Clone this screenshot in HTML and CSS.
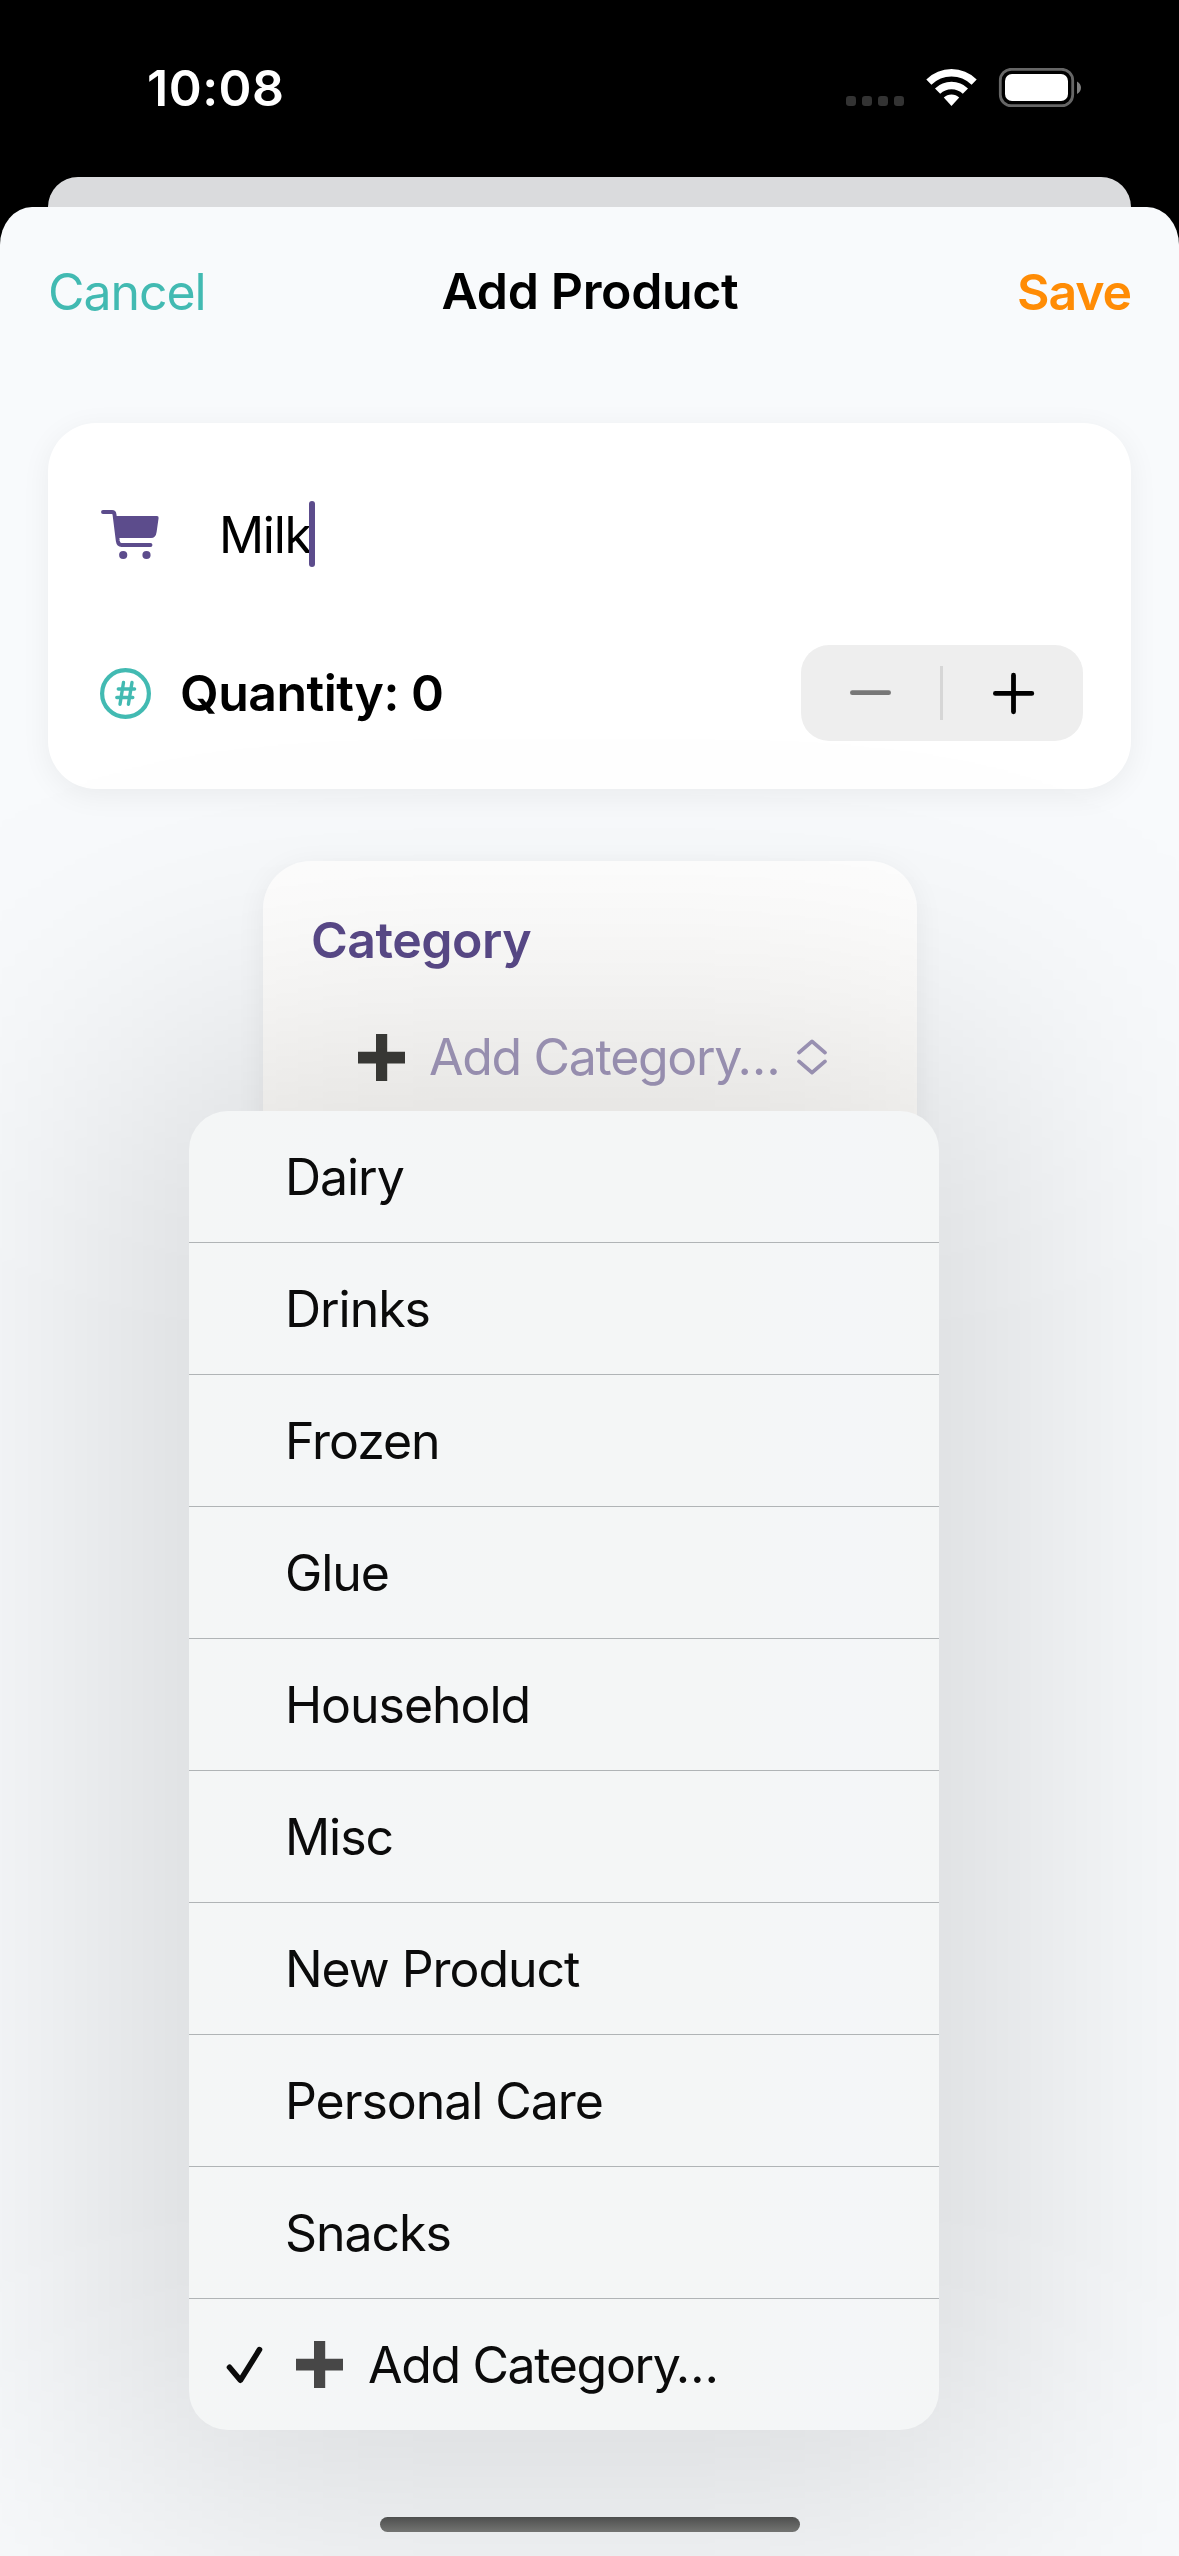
FILE: index.html
```html
<!DOCTYPE html>
<html lang="en">
<head>
<meta charset="utf-8">
<title>Add Product</title>
<link rel="stylesheet" href="styles.css">
</head>
<body>
<div class="phone">
  <header class="status">
    <span class="time">10:08</span>
    <svg class="status-icons" viewBox="846 68 236 40" width="236" height="40" aria-hidden="true">
      <g fill="#333">
        <rect x="846" y="96" width="10" height="10" rx="3.2"/>
        <rect x="862" y="96" width="10" height="10" rx="3.2"/>
        <rect x="878" y="96" width="10" height="10" rx="3.2"/>
        <rect x="894" y="96" width="10" height="10" rx="3.2"/>
      </g>
      <g fill="#fff">
        <path d="M926.3 79.5 Q937 69 951.5 69 Q966 69 976.7 79.5 L971.6 84.8 Q963 76.6 951.5 76.6 Q940 76.6 931.4 84.8 Z"/>
        <path d="M935 88.4 Q942 81.8 951.5 81.8 Q961 81.8 968 88.4 L962.8 93.8 Q958 89.2 951.5 89.2 Q945 89.2 940.2 93.8 Z"/>
        <path d="M943.8 97.6 Q947 94.4 951.5 94.4 Q956 94.4 959.2 97.6 L951.5 106 Z"/>
      </g>
      <rect x="1000.3" y="69.3" width="72.4" height="36.4" rx="11" fill="none" stroke="#666" stroke-width="2.8"/>
      <rect x="1005" y="74" width="63" height="27" rx="7" fill="#fff"/>
      <path d="M1077 81.5 Q1081 84 1081 87.7 Q1081 91.5 1077 94 Z" fill="#808080"/>
    </svg>
  </header>
  <div class="sheet-behind"></div>
  <main class="sheet">
    <nav class="bar">
      <span class="cancel">Cancel</span>
      <h1 class="title">Add Product</h1>
      <span class="save">Save</span>
    </nav>

    <section class="card product">
      <div class="row name">
        <svg class="cart" viewBox="96 504 66 60" width="66" height="60" aria-hidden="true">
          <path d="M103 512 H112 Q114.2 512 114.5 514.4 L117.8 541 Q118.4 545 121.5 545 H150.5" fill="none" stroke="#5c4c8c" stroke-width="3.9" stroke-linecap="round"/>
          <path d="M114.5 516 H157 Q158.8 516 158.6 518 L156.6 532 Q155.8 538 151 538 H118 Z" fill="#5c4c8c"/>
          <circle cx="123.2" cy="555" r="4.1" fill="#5c4c8c"/>
          <circle cx="146.5" cy="555" r="4.1" fill="#5c4c8c"/>
        </svg>
        <span class="field">Milk</span><i class="caret"></i>
      </div>
      <div class="row quantity">
        <svg viewBox="96 663 60 60" width="60" height="60" aria-hidden="true" fill="none" stroke="#42bab2" stroke-linecap="round">
          <circle cx="125.5" cy="693.5" r="23.4" stroke-width="4.2"/>
          <path d="M123.5 682.5 L120 704.3 M132 682.5 L128.4 704.3 M118.3 689 H134.6 M116.8 697.5 H132.8" stroke-width="3.4"/>
        </svg>
        <span class="label">Quantity: 0</span>
        <div class="stepper">
          <svg viewBox="801 645 282 96" width="282" height="96" aria-hidden="true" stroke-linecap="round">
            <path d="M852.4 692.7 H888.6" stroke="#777" stroke-width="4.8"/>
            <path d="M941.5 666 V720" stroke="#d6d6d6" stroke-width="3" stroke-linecap="butt"/>
            <path d="M995.4 693.4 H1031.8 M1013.5 675.2 V711.8" stroke="#000" stroke-width="4.8"/>
          </svg>
        </div>
      </div>
    </section>

    <section class="card category">
      <h2 class="heading">Category</h2>
      <div class="picker">
        <svg viewBox="0 0 47 47" width="47" height="47" aria-hidden="true"><path d="M18 0 H29.2 V17.8 H47 V29.4 H29.2 V47 H18 V29.4 H0 V17.8 H18 Z" fill="#3c3c39"/></svg>
        <span class="value">Add Category…</span>
        <svg class="chevrons" viewBox="0 0 32 38" width="32" height="38" aria-hidden="true" fill="none" stroke="#a39abd" stroke-width="3.8" stroke-linecap="round" stroke-linejoin="round"><path d="M3 14.6 L16 3.4 L29 14.6 M3 23.4 L16 34.6 L29 23.4"/></svg>
      </div>
      <ul class="menu">
        <li>Dairy</li>
        <li>Drinks</li>
        <li>Frozen</li>
        <li>Glue</li>
        <li>Household</li>
        <li>Misc</li>
        <li>New Product</li>
        <li>Personal Care</li>
        <li>Snacks</li>
        <li class="selected">
          <svg class="check" viewBox="0 0 40 40" width="40" height="40" aria-hidden="true"><path d="M4.5 22.3 L15.4 35.2 L34.5 4.6" fill="none" stroke="#0b0b0b" stroke-width="5.6" stroke-linecap="round" stroke-linejoin="round"/></svg>
          <svg class="plus" viewBox="0 0 47 47" width="47" height="47" aria-hidden="true"><path d="M18 0 H29.2 V17.8 H47 V29.4 H29.2 V47 H18 V29.4 H0 V17.8 H18 Z" fill="#474747"/></svg>
          <span class="add">Add Category…</span>
        </li>
      </ul>
    </section>
    <div class="home"></div>
  </main>
</div>
</body>
</html>
```
FILE: styles.css
```css
* { box-sizing: border-box; margin: 0; padding: 0; }

body {
  background: #000;
  font: 400 50px/61px "Inter", "Liberation Sans", sans-serif;
  color: #000;
}

svg { display: block; flex: none; }

.phone {
  width: 1179px;
  height: 2556px;
  display: flex;
  flex-direction: column;
  overflow: hidden;
}

.status {
  height: 177px;
  padding: 58px 97px 0 147px;
  display: flex;
  justify-content: space-between;
  align-items: flex-start;
}

.time { color: #fff; font-weight: 600; letter-spacing: 0.5px; }
.status-icons { margin-top: 10px; }

.sheet-behind {
  height: 30px;
  margin: 0 48px;
  border-radius: 30px 30px 0 0;
  background: #dadbdd;
}

.sheet {
  position: relative;
  flex: 1;
  overflow: hidden;
  border-radius: 32px 32px 0 0 / 38px 38px 0 0;
  background: #f8fafc;
}

.bar {
  height: 168px;
  padding: 0 48px;
  display: grid;
  grid-template-columns: 1fr auto 1fr;
  align-items: center;
}

.cancel { color: #42bab2; letter-spacing: -1.05px; padding-top: 2px; }
.title { font-size: 50px; font-weight: 600; letter-spacing: -0.35px; padding-left: 1px; }
.save { color: #ff8c05; font-weight: 600; letter-spacing: -1.1px; padding-top: 2px; justify-self: end; }

.card {
  border-radius: 48px;
  padding: 48px;
  background: #fff;
  box-shadow: 0 6px 30px rgba(0, 0, 0, 0.06);
}

.product {
  margin: 48px 48px 0;
  display: flex;
  flex-direction: column;
  gap: 48px;
}

.row { display: flex; align-items: center; }

.name { height: 126px; }
.field { margin-left: 57px; padding-top: 2px; letter-spacing: -1.3px; }
.caret {
  width: 6px;
  height: 66px;
  margin-left: -2px;
  border-radius: 3px;
  background: #5c4c8c;
}

.quantity { height: 96px; }
.label { margin-left: 24px; padding-top: 1px; font-weight: 600; letter-spacing: -0.5px; }
.stepper { margin-left: auto; border-radius: 28px; background: #eee; }

.category {
  position: relative;
  width: 654px;
  height: 330px;
  margin: 72px 0 0 263px;
  background: linear-gradient(#fff, #fffefc 250px);
}

.heading {
  padding-top: 1px;
  font-size: 50px;
  font-weight: 600;
  letter-spacing: -0.5px;
  color: #5a4a89;
}

.picker {
  height: 61px;
  margin: 56px 0 0 47px;
  display: flex;
  align-items: center;
}
.value { margin-left: 24px; color: #a39abd; letter-spacing: -1.3px; }
.chevrons { margin-left: 17px; margin-top: -2px; }

/* Pop-up list laid over the category card */
.menu {
  position: absolute;
  left: -74px;
  top: 250px;
  width: 750px;
  isolation: isolate;
  list-style: none;
  color: #0b0b0b;
  letter-spacing: -1.05px;
}

.menu::before,
.menu::after {
  content: "";
  position: absolute;
  inset: 0;
  z-index: -1;
  border-radius: 39px;
  background: linear-gradient(90deg, #f4f6f6, #f4f6f7 22%, #f4f6f6 45%, #f4f6f6 70%, #f4f6f8 88%, #f4f6f6);
}

/* Soft, wide shadow around the list */
.menu::before {
  z-index: -2;
  inset: -75px;
  background: rgba(0, 0, 0, 0.135);
  filter: blur(150px);
}

.menu li {
  height: 132px;
  padding: 2px 0 0 96px;
  display: flex;
  align-items: center;
  border-bottom: 1px solid #b0b4b6;
}

.menu .selected { height: 131px; padding-left: 36px; border-bottom: 0; }
.plus { margin-left: 31px; margin-top: -3px; }
.check { margin-top: -1px; }
.add { margin-left: 25px; letter-spacing: -1.35px; }

.home {
  position: absolute;
  left: 380px;
  bottom: 24px;
  width: 420px;
  height: 15px;
  border-radius: 8px;
  background: linear-gradient(#4e4f4e, #737472);
}
```
